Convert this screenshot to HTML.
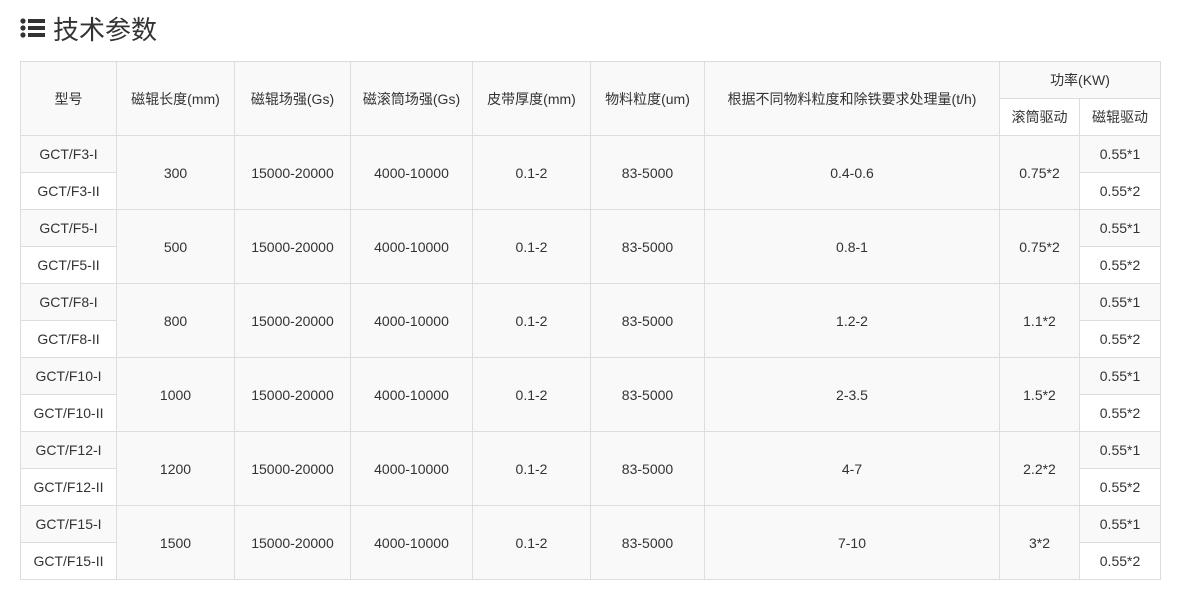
<!DOCTYPE html>
<html><head><meta charset="utf-8"><style>
body{margin:0;background:#fff;font-family:"Liberation Sans","Noto Sans CJK SC",sans-serif;color:#333;}
.title{position:absolute;left:20px;top:10px;height:36px;display:flex;align-items:center;font-size:26px;color:#333;}
.title svg{margin-right:8px}
table{position:absolute;left:20px;top:61px;border-collapse:collapse;table-layout:fixed;width:1140px;font-size:14px;}
td{border:1px solid #ddd;text-align:center;height:36px;padding:0;background:#fff;}
tr.g td{background:#f9f9f9;}
</style></head><body>
<div class="title"><svg width="25" height="20" viewBox="0 0 25 20"><circle cx="3" cy="3" r="2.6" fill="#333"/><circle cx="3" cy="10" r="2.6" fill="#333"/><circle cx="3" cy="17" r="2.6" fill="#333"/><rect x="8" y="1" width="17" height="4" fill="#333"/><rect x="8" y="8" width="17" height="4" fill="#333"/><rect x="8" y="15" width="17" height="4" fill="#333"/></svg>技术参数</div>
<table>
<colgroup><col style="width:96px"><col style="width:118px"><col style="width:116px"><col style="width:122px"><col style="width:118px"><col style="width:114px"><col style="width:295px"><col style="width:80px"><col style="width:81px"></colgroup>
<tr class="g"><td rowspan="2">型号</td><td rowspan="2">磁辊长度(mm)</td><td rowspan="2">磁辊场强(Gs)</td><td rowspan="2">磁滚筒场强(Gs)</td><td rowspan="2">皮带厚度(mm)</td><td rowspan="2">物料粒度(um)</td><td rowspan="2">根据不同物料粒度和除铁要求处理量(t/h)</td><td colspan="2">功率(KW)</td></tr>
<tr><td>滚筒驱动</td><td>磁辊驱动</td></tr>
<tr class="g"><td>GCT/F3-I</td><td rowspan="2">300</td><td rowspan="2">15000-20000</td><td rowspan="2">4000-10000</td><td rowspan="2">0.1-2</td><td rowspan="2">83-5000</td><td rowspan="2">0.4-0.6</td><td rowspan="2">0.75*2</td><td>0.55*1</td></tr>
<tr><td>GCT/F3-II</td><td>0.55*2</td></tr>
<tr class="g"><td>GCT/F5-I</td><td rowspan="2">500</td><td rowspan="2">15000-20000</td><td rowspan="2">4000-10000</td><td rowspan="2">0.1-2</td><td rowspan="2">83-5000</td><td rowspan="2">0.8-1</td><td rowspan="2">0.75*2</td><td>0.55*1</td></tr>
<tr><td>GCT/F5-II</td><td>0.55*2</td></tr>
<tr class="g"><td>GCT/F8-I</td><td rowspan="2">800</td><td rowspan="2">15000-20000</td><td rowspan="2">4000-10000</td><td rowspan="2">0.1-2</td><td rowspan="2">83-5000</td><td rowspan="2">1.2-2</td><td rowspan="2">1.1*2</td><td>0.55*1</td></tr>
<tr><td>GCT/F8-II</td><td>0.55*2</td></tr>
<tr class="g"><td>GCT/F10-I</td><td rowspan="2">1000</td><td rowspan="2">15000-20000</td><td rowspan="2">4000-10000</td><td rowspan="2">0.1-2</td><td rowspan="2">83-5000</td><td rowspan="2">2-3.5</td><td rowspan="2">1.5*2</td><td>0.55*1</td></tr>
<tr><td>GCT/F10-II</td><td>0.55*2</td></tr>
<tr class="g"><td>GCT/F12-I</td><td rowspan="2">1200</td><td rowspan="2">15000-20000</td><td rowspan="2">4000-10000</td><td rowspan="2">0.1-2</td><td rowspan="2">83-5000</td><td rowspan="2">4-7</td><td rowspan="2">2.2*2</td><td>0.55*1</td></tr>
<tr><td>GCT/F12-II</td><td>0.55*2</td></tr>
<tr class="g"><td>GCT/F15-I</td><td rowspan="2">1500</td><td rowspan="2">15000-20000</td><td rowspan="2">4000-10000</td><td rowspan="2">0.1-2</td><td rowspan="2">83-5000</td><td rowspan="2">7-10</td><td rowspan="2">3*2</td><td>0.55*1</td></tr>
<tr><td>GCT/F15-II</td><td>0.55*2</td></tr>
</table>
</body></html>
